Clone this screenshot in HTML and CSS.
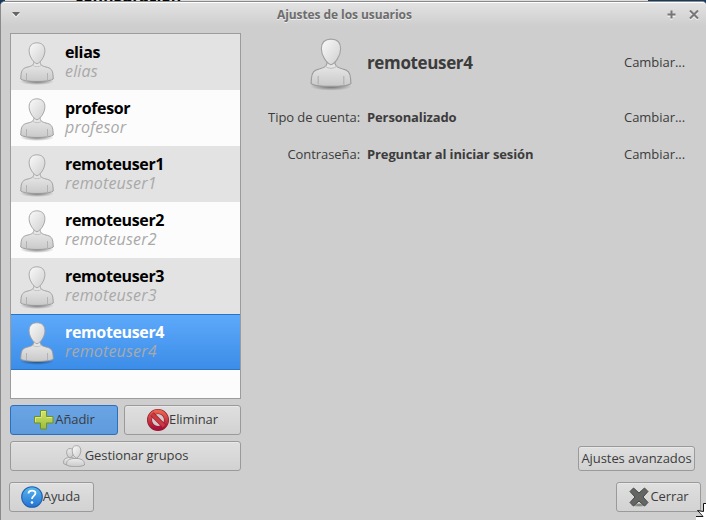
FILE: index.html
```html
<!DOCTYPE html>
<html lang="es">
<head>
<meta charset="utf-8">
<title>Ajustes de los usuarios</title>
<link rel="stylesheet" href="styles.css">
</head>
<body>
<svg class="defs" width="0" height="0">
  <defs>
    <linearGradient id="body" x1="0" y1="0" x2="0" y2="1"><stop offset="0" stop-color="#ececec"/><stop offset="1" stop-color="#c9c9c9"/></linearGradient>
    <linearGradient id="head" x1="0" y1="0" x2="1" y2="1"><stop offset="0" stop-color="#fafafa"/><stop offset="1" stop-color="#cfcfcf"/></linearGradient>
    <linearGradient id="green" x1="0" y1="0" x2="0" y2="1"><stop offset="0" stop-color="#d3e566"/><stop offset="1" stop-color="#9dbb3c"/></linearGradient>
    <linearGradient id="red" x1="0" y1="0" x2="0" y2="1"><stop offset="0" stop-color="#e8624e"/><stop offset="1" stop-color="#a90f38"/></linearGradient>
    <linearGradient id="blue" x1="0" y1="0" x2="0" y2="1"><stop offset="0" stop-color="#57b9ee"/><stop offset="1" stop-color="#2571d3"/></linearGradient>
    <radialGradient id="shadow"><stop offset="0" stop-color="#000" stop-opacity=".5"/><stop offset="1" stop-color="#000" stop-opacity="0"/></radialGradient>
    <symbol id="person" viewBox="0 0 36 44">
      <ellipse cx="18" cy="39.5" rx="17" ry="3.5" fill="url(#shadow)"/>
      <path d="M15 19h6c0 4 2 5 6 6 5 1 6.500 3 7 8l.3 4c-3 3.300-29.600 3.300-32.600 0l.3-4c.5-5 2-7 7-8 4-1 6-2 6-6z" fill="url(#body)" stroke="#999" stroke-width=".9"/>
      <path d="M7.500 31v7M28.500 31v7" stroke="#aaa" stroke-width=".8"/>
      <path d="M13 23q5 3.500 10 0" fill="none" stroke="#bbb" stroke-width=".8"/>
      <path d="M18 .8c5 0 7.900 3 7.900 8 0 5.500-4.400 12-7.900 13-3.500-1-7.900-7.500-7.900-13 0-5 2.900-8 7.900-8z" fill="url(#head)" stroke="#a2a2a2" stroke-width=".9"/>
    </symbol>
  </defs>
</svg>
<div class="backdrop"><span class="behind">configuracion</span></div>
<main class="window">
  <header class="titlebar">
    <svg class="menu" width="10" height="7" viewBox="0 0 10 7"><path d="M1 2.500h8L5 6.500z" fill="#fff"/><path d="M1 1h8L5 5.500z" fill="#666"/></svg>
    <h1>Ajustes de los usuarios</h1>
    <div class="controls">
      <svg width="9" height="10" viewBox="0 0 9 10"><path d="M4.500 2v8M.5 6h8" stroke="#eee" stroke-width="2"/><path d="M4.500 .5v8M.5 4.500h8" stroke="#777" stroke-width="2"/></svg>
      <svg width="10" height="10" viewBox="0 0 10 10"><path d="M1 2l8 8M9 2l-8 8" stroke="#eee" stroke-width="2"/><path d="M1 .5l8 8M9 .5l-8 8" stroke="#777" stroke-width="2"/></svg>
    </div>
  </header>
  <div class="content">
    <section class="sidebar">
      <ul class="users">
        <li><svg><use href="#person"/></svg><div><b>elias</b><i>elias</i></div></li>
        <li><svg><use href="#person"/></svg><div><b>profesor</b><i>profesor</i></div></li>
        <li><svg><use href="#person"/></svg><div><b>remoteuser1</b><i>remoteuser1</i></div></li>
        <li><svg><use href="#person"/></svg><div><b>remoteuser2</b><i>remoteuser2</i></div></li>
        <li><svg><use href="#person"/></svg><div><b>remoteuser3</b><i>remoteuser3</i></div></li>
        <li class="selected"><svg><use href="#person"/></svg><div><b>remoteuser4</b><i>remoteuser4</i></div></li>
      </ul>
      <div class="actions">
        <button class="primary"><svg width="22" height="22" viewBox="0 0 22 22"><path d="M7.500 1.500h6v6h6.500v6.500h-6.500v6h-6v-6H1.500V7.500h6z" fill="url(#green)" stroke="#6f9320"/><path d="M8.500 7.500v-5h4M2.500 13V8.500h6M13.500 8.500H19" fill="none" stroke="#e6f0a0" stroke-opacity=".7"/></svg><span>Añadir</span></button>
        <button><svg width="22" height="22" viewBox="0 0 22 22"><circle cx="11" cy="11" r="8.500" fill="#d6c9ca" stroke="#8d1c2d" stroke-width="5"/><circle cx="11" cy="11" r="8.500" fill="none" stroke="url(#red)" stroke-width="3.800"/><path d="M5 5l12 12" stroke="#a11c32" stroke-width="4.600"/><path d="M5 5l12 12" stroke="#cc3a40" stroke-width="3.200"/></svg><span>Eliminar</span></button>
      </div>
      <button class="groups"><svg width="22" height="22" viewBox="0 0 22 22"><g fill="url(#body)" stroke="#999" stroke-width=".8"><path d="M.6 18.500c0-4 .5-5 5-6h3c4 1 4.500 3 4.500 6-3 2-10 2-12.500 0z"/><path d="M7 3.500c5 0 4 8 0 9.500-4-1.500-5-9.500 0-9.500z"/><path d="M3.500 20c0-4 1-5.500 6.500-6.500h5c5 1 6.500 2.500 6.500 6.500-3 2.200-15 2.200-18 0z"/><path d="M13.500.6c6.500 0 5 10.400 0 12.400-5-2-6.500-12.400 0-12.400z" fill="url(#head)"/></g></svg><span>Gestionar grupos</span></button>
    </section>
    <section class="details">
      <div class="row profile"><svg class="avatar"><use href="#person"/></svg><h2>remoteuser4</h2><a>Cambiar...</a></div>
      <div class="row"><span class="label">Tipo de cuenta:</span><b>Personalizado</b><a>Cambiar...</a></div>
      <div class="row"><span class="label">Contraseña:</span><b>Preguntar al iniciar sesión</b><a>Cambiar...</a></div>
      <button class="advanced"><span>Ajustes avanzados</span></button>
    </section>
  </div>
  <footer>
    <button class="help"><svg width="22" height="22" viewBox="0 0 22 22"><circle cx="11" cy="11" r="10.300" fill="url(#blue)" stroke="#1f5fae" stroke-width="1.100"/><path d="M7.500 7.500c0-3.800 7-3.800 7-.5 0 2.900-3.500 2.800-3.500 6" fill="none" stroke="#fff" stroke-width="1.800"/><circle cx="11" cy="16.500" r="1.300" fill="#fff"/></svg><span>Ayuda</span></button>
    <button class="close"><svg width="22" height="22" viewBox="0 0 22 22"><ellipse cx="11" cy="19" rx="9" ry="2" fill="url(#shadow)"/><path d="M5.500 2L11 7l5.500-5L20 5.500 15 11l5 5.500-3.500 3.500L11 15l-5.500 5L2 16.500 7 11 2 5.500z" fill="#646664" stroke="#454745" stroke-linejoin="round"/></svg><span>Cerrar</span></button>
  </footer>
</main>
<svg class="cursor" width="10" height="18" viewBox="0 0 10 18"><path d="M10 1H7.500v8.500H1.500L6 14.500H0V18h10z" fill="#fff"/><path d="M10 1.500H7.500v8L1.500 8.500 7 14.500H0" fill="none" stroke="#111"/></svg>
</body>
</html>
```
FILE: styles.css
```css
* { box-sizing: border-box; }
body { margin: 0; width: 706px; height: 520px; overflow: hidden; position: relative; font: 13px "Open Sans", "Noto Sans", sans-serif; color: #3c3c3c; background: #15395f; }
.defs { position: absolute; }
.backdrop { position: absolute; left: 5px; top: 0; width: 643px; height: 2px; background: #dedede; overflow: hidden; }
.behind { position: absolute; left: 70px; top: -12px; color: #000; font: bold 16px/16px "Open Sans", sans-serif; letter-spacing: -.3px; }
.window { position: relative; margin-top: 1px; height: 519px; background: #cecece; border: 1px solid #8a8a8a; border-width: 1px 0 0 1px; border-radius: 5px 4px 0 0; display: flex; flex-direction: column; }
.titlebar { height: 24px; flex: none; display: flex; align-items: center; padding: 0 7px 0 10px; border-top: 1px solid #fff; border-radius: 4px 4px 0 0; background: linear-gradient(#e2e2e2, #cecece); }
h1 { font-size: 12px; line-height: 20px; margin: 0 auto 0 256px; color: #6d6d6d; text-shadow: 0 1px #eee; letter-spacing: -.08px; }
.controls { display: flex; gap: 13px; }
.content { display: flex; padding: 7px 0 0 9px; height: 445px; flex: none; }
.sidebar { width: 231px; flex: none; }
.users { list-style: none; margin: 0 0 6px; padding: 0; height: 366px; border: 1px solid #9c9c9c; background: #fcfcfc; }
.users li { height: 56px; display: flex; gap: 10px; padding: 8px 8px 4px; }
.users li:nth-child(odd) { background: #e3e3e3; }
.users li svg { width: 36px; height: 44px; }
.users b, .users i { display: block; font-size: 16px; line-height: 19px; color: #000; }
.users b { letter-spacing: -.36px; padding-top: 1px; }
.users i { color: #a9a9a9; letter-spacing: .18px; }
.users li.selected { background: linear-gradient(#5da9fb, #3c8de8); border: 1px solid #2b73c5; border-width: 1px 0; padding-top: 7px; }
.users .selected b { color: #fff; }
button { height: 30px; border: 1px solid #9a9a9a; border-radius: 3px; background: linear-gradient(#dfdfdf, #d2d2d2); box-shadow: inset 0 1px #e8e8e8; padding: 0; font: inherit; color: #3c3c3c; display: flex; align-items: center; justify-content: center; white-space: nowrap; letter-spacing: -.08px; }
button svg { flex: none; }
button span { padding-bottom: 2px; }
.actions { display: grid; grid-template-columns: 108px 117px; gap: 6px; margin-bottom: 6px; }
.primary { border-color: #2b6fbe; background: linear-gradient(#6aa4e4, #5e9bdd); box-shadow: none; }
.groups { width: 231px; }
.details { flex: 1; margin-left: 21px; padding-right: 21px; display: flex; flex-direction: column; }
.row { height: 37px; display: flex; align-items: center; }
.row b { letter-spacing: -.12px; }
.profile { height: 65px; padding-bottom: 7px; }
.avatar { width: 44px; height: 54px; margin: 5px 14px 0 47px; }
h2 { font-size: 17px; margin: 0; letter-spacing: -.36px; }
.row a { margin-left: auto; letter-spacing: -.05px; }
.label { width: 98px; text-align: right; margin-right: 7px; white-space: nowrap; letter-spacing: -.07px; }
.advanced { margin: auto -10px 0 auto; height: 25px; width: 117px; }
footer { display: flex; justify-content: space-between; padding: 11px 5px 0 8px; }
.help, .close { width: 85px; }
.help { padding-right: 2px; }
.cursor { position: absolute; left: 696px; top: 502px; }
```
